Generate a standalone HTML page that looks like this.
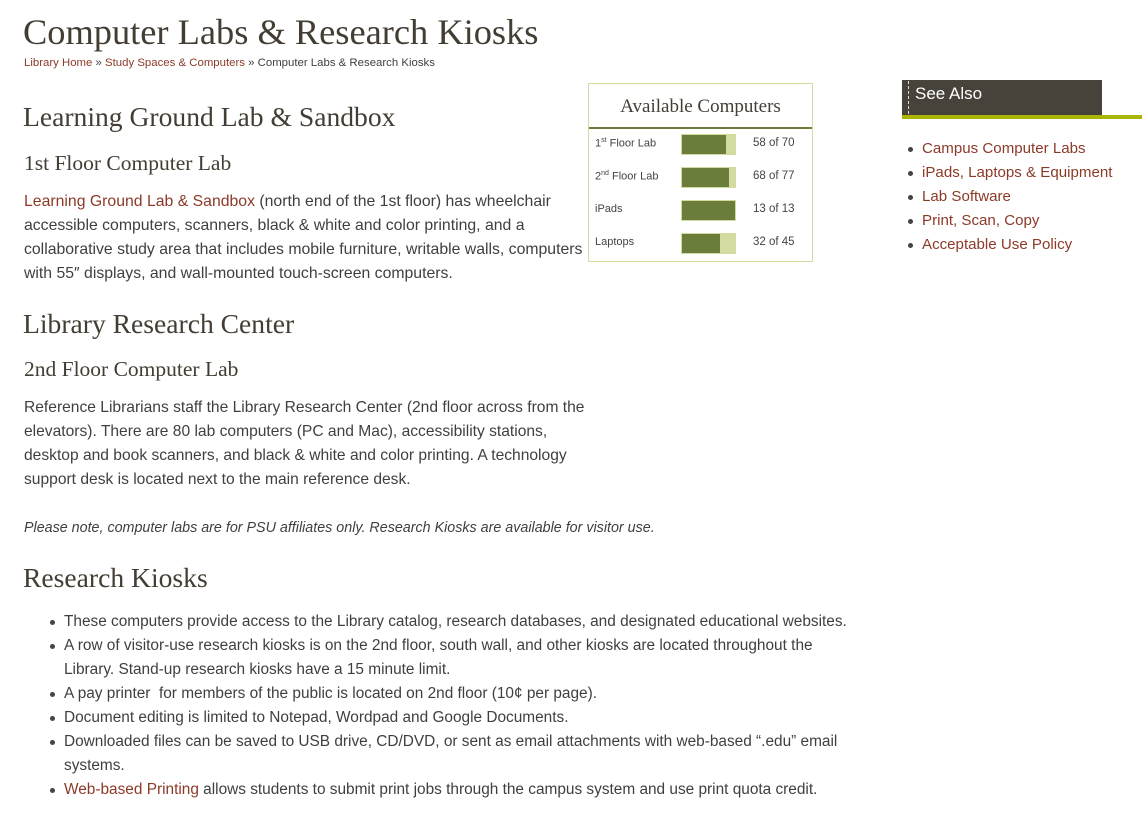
<!DOCTYPE html>
<html><head><meta charset="utf-8"><style>
*{margin:0;padding:0;box-sizing:border-box}
body{width:1142px;height:823px;background:#fff;color:#3f3f3f;font-family:"Liberation Sans",sans-serif;font-size:15.4px;position:relative;overflow:hidden}
.a{position:absolute;white-space:nowrap}
.s{font-family:"Liberation Serif",serif;color:#433d33}
a{color:#8c3a28;text-decoration:none}
.p{line-height:24px}
ul{list-style:none}
li{position:relative}
li:before{content:"";position:absolute;left:-14px;top:10px;width:5px;height:5px;border-radius:50%;background:#444}
.w{position:absolute;left:588px;top:83px;width:225px;height:179px;border:1px solid #d3dba0}
.wh{height:45px;border-bottom:2px solid #6b7d3a;text-align:center;font-family:"Liberation Serif",serif;font-size:19px;color:#433d33;padding-top:12px}
.r{position:absolute;left:6px;font-size:11px;color:#444}
.b{position:absolute;left:92px;width:55px;height:21px;background:#d3dba0;border:1px solid #d3dba0}
.b i{display:block;height:19px;background:#6b7d3a}
.c{position:absolute;left:164px;font-size:11.5px;color:#444}
</style></head><body>
<div class="a s" style="left:23px;top:11px;font-size:36.4px">Computer Labs &amp; Research Kiosks</div>
<div class="a" style="left:24px;top:57px;font-size:11.4px"><a href="#">Library Home</a> » <a href="#">Study Spaces &amp; Computers</a> » Computer Labs &amp; Research Kiosks</div>
<div class="a s" style="left:23px;top:101px;font-size:27.6px">Learning Ground Lab &amp; Sandbox</div>
<div class="a s" style="left:24px;top:151px;font-size:21.5px">1st Floor Computer Lab</div>
<div class="a p" style="left:24px;top:190px;font-size:15.8px"><a href="#">Learning Ground Lab &amp; Sandbox</a> (north end of the 1st floor) has wheelchair<br>accessible computers, scanners, black &amp; white and color printing, and a<br>collaborative study area that includes mobile furniture, writable walls, computers<br>with 55″ displays, and wall-mounted touch-screen computers.</div>
<div class="a s" style="left:23px;top:308px;font-size:27.6px">Library Research Center</div>
<div class="a s" style="left:24px;top:357px;font-size:21.5px">2nd Floor Computer Lab</div>
<div class="a p" style="left:24px;top:396px;font-size:15.6px">Reference Librarians staff the Library Research Center (2nd floor across from the<br>elevators). There are 80 lab computers (PC and Mac), accessibility stations,<br>desktop and book scanners, and black &amp; white and color printing. A technology<br>support desk is located next to the main reference desk.</div>
<div class="a p" style="left:24px;top:516px;font-style:italic;font-size:14.3px">Please note, computer labs are for PSU affiliates only. Research Kiosks are available for visitor use.</div>
<div class="a s" style="left:23px;top:562px;font-size:27.6px">Research Kiosks</div>
<ul class="a p" style="left:64px;top:610px">
<li>These computers provide access to the Library catalog, research databases, and designated educational websites.</li>
<li>A row of visitor-use research kiosks is on the 2nd floor, south wall, and other kiosks are located throughout the<br>Library. Stand-up research kiosks have a 15 minute limit.</li>
<li>A pay printer &nbsp;for members of the public is located on 2nd floor (10¢ per page).</li>
<li>Document editing is limited to Notepad, Wordpad and Google Documents.</li>
<li>Downloaded files can be saved to USB drive, CD/DVD, or sent as email attachments with web-based “.edu” email<br>systems.</li>
<li><a href="#">Web-based Printing</a> allows students to submit print jobs through the campus system and use print quota credit.</li>
</ul>
<div class="w">
<div class="wh">Available Computers</div>
<div class="r" style="top:53px">1<sup style="font-size:7px">st</sup> Floor Lab</div><div class="b" style="top:50px"><i style="width:44px"></i></div><div class="c" style="top:53px">58 of 70</div>
<div class="r" style="top:86px">2<sup style="font-size:7px">nd</sup> Floor Lab</div><div class="b" style="top:83px"><i style="width:47px"></i></div><div class="c" style="top:86px">68 of 77</div>
<div class="r" style="top:119px">iPads</div><div class="b" style="top:116px"><i style="width:53px"></i></div><div class="c" style="top:119px">13 of 13</div>
<div class="r" style="top:152px">Laptops</div><div class="b" style="top:149px"><i style="width:38px"></i></div><div class="c" style="top:152px">32 of 45</div>
</div>
<div class="a" style="left:902px;top:80px;width:200px;height:35px;background:#48433a"></div>
<div class="a" style="left:908px;top:81px;height:33px;border-left:1px dashed #ddd"></div>
<div class="a" style="left:902px;top:115px;width:240px;height:4px;background:#a9b500"></div>
<div class="a" style="left:915px;top:83px;color:#fff;font-size:17px;line-height:22px">See Also</div>
<ul class="a p" style="left:922px;top:137px;font-size:15.1px">
<li><a href="#">Campus Computer Labs</a></li>
<li><a href="#">iPads, Laptops &amp; Equipment</a></li>
<li><a href="#">Lab Software</a></li>
<li><a href="#">Print, Scan, Copy</a></li>
<li><a href="#">Acceptable Use Policy</a></li>
</ul>
</body></html>
